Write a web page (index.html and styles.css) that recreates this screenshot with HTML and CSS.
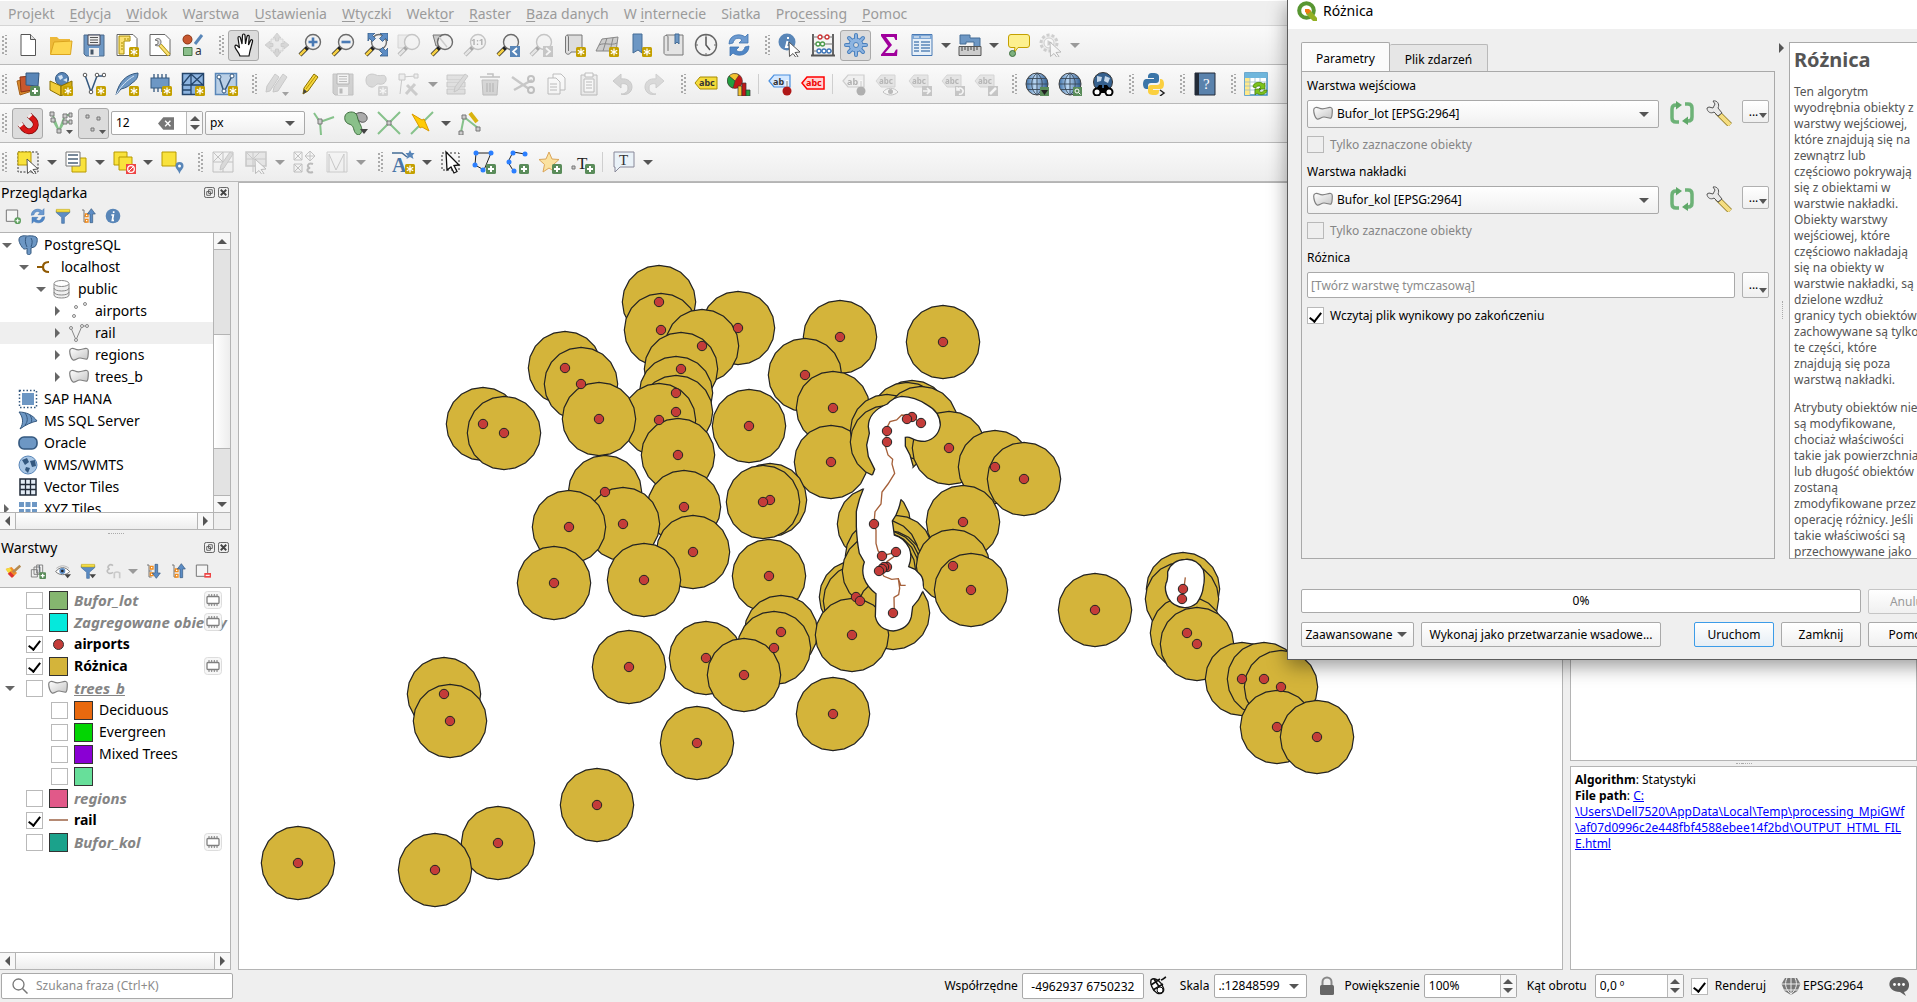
FILE: index.html
```html
<!DOCTYPE html>
<html lang="pl">
<head>
<meta charset="utf-8">
<title>QGIS</title>
<link rel="stylesheet" href="styles.css">
</head>
<body>
<svg class="paints" aria-hidden="true">
<defs>
<linearGradient id="grey" x1="0" y1="0" x2="1" y2="1"><stop offset="0" stop-color="#fff"/><stop offset="1" stop-color="#c4c4c4"/></linearGradient>
<linearGradient id="globe" x1="0" y1="0" x2="1" y2="0"><stop offset="0" stop-color="#3c6ea5"/><stop offset=".4" stop-color="#b9d6f2"/><stop offset="1" stop-color="#2c5a90"/></linearGradient>
</defs>
</svg>
<svg class="sprite" aria-hidden="true">
<symbol id="y" viewBox="0 0 24 24"><rect x="14" y="14" width="10" height="10" rx="1.500" fill="#c4a000"/><path d="M19 15.500v7M15.800 17.200l6.400 3.600M22.200 17.200l-6.400 3.600" stroke="#fff" stroke-width="1.300"/></symbol>
<symbol id="g" viewBox="0 0 24 24"><rect x="14" y="14" width="10" height="10" rx="1.500" fill="#5a8c5a"/><path d="M19 16v6M16 19h6" stroke="#fff" stroke-width="2"/></symbol>
<symbol id="lens" viewBox="0 0 24 24"><path d="M10 14L2 22" stroke="#222" stroke-width="4"/><path d="M7.500 16.500L2 22" stroke="#f5cf43" stroke-width="2.600"/><circle cx="15" cy="9" r="7.500" fill="#f1f1f1" stroke="#6b6b6b" stroke-width="1.400"/></symbol>
<symbol id="cur" viewBox="0 0 24 24"><path d="M11 9l11 10-5 .5 3 4-2 1-3-4-3.500 3z" fill="#fff" stroke="#555" stroke-width="1"/></symbol>
<symbol id="new" viewBox="0 0 24 24"><path d="M5 1.500h9.500l5 5V22.500H5z" fill="#fff" stroke="#555"/><path d="M14.500 1.500v5h5" fill="#ddd" stroke="#555"/></symbol>
<symbol id="open" viewBox="0 0 24 24"><path d="M1 21V4h7l2 2h11v15z" fill="#edb93a"/><path d="M1.500 21.500L5 9l18-1-1.500 13.500z" fill="#fdd64f" stroke="#dba520"/></symbol>
<symbol id="save" viewBox="0 0 24 24"><path d="M2 2h20v21H4l-2-2z" fill="#6d97c4" stroke="#4d6b8c"/><path d="M6 2h12v10H6z" fill="#eee" stroke="#445"/><path d="M8 4.500h8M8 7h8M8 9.500h8" stroke="#555"/><path d="M7 15h10v8H7z" fill="#eee"/><path d="M8.500 16.500h3v5h-3z" fill="#456"/></symbol>
<symbol id="layout" viewBox="0 0 24 24"><path d="M2 1.500h16l4 4V22.500H2z" fill="#fff" stroke="#666"/><path d="M4 3h11v5H9v13H4z" fill="#fbe174" stroke="#a88c00"/><path d="M6 10h2M6 13h2M6 16h2M10 5v2M13 5v2" stroke="#a88c00"/><use href="#y"/></symbol>
<symbol id="lman" viewBox="0 0 24 24"><path d="M2 1.500h15l5 5V22.500H2z" fill="#fff" stroke="#666"/><path d="M12 12l9 10" stroke="#a88c00" stroke-width="4"/><path d="M12 12l9 10" stroke="#fbe174" stroke-width="2.500"/><path d="M7 7l3 1v3l-3 1c3 2 6 0 6-3s-3-5-6-2z" fill="#ddd" stroke="#777"/></symbol>
<symbol id="style" viewBox="0 0 24 24"><circle cx="6.500" cy="6.500" r="4.500" fill="#c8572f" stroke="#8b3413"/><path d="M14 11l7-9" stroke="#5986b8" stroke-width="3"/><path d="M2.500 14.500h8.500v8H2.500z" fill="#8bbf8b" stroke="#4a7a4a"/><text x="14" y="22" font-family="Noto Sans" font-size="12" fill="#333">a</text></symbol>
<symbol id="hand" viewBox="0 0 24 24"><path d="M8 23c-1-4-6-8-5-10s3 0 4.500 2L6 5c0-2 2-2 2.500 0l1.500 6L10.500 2.500c0-2 2.500-2 2.500 0l.5 8.500 1.500-7.500c.5-1.500 2.500-1.500 2.200.5L16.500 12l2-4.500c1-1.500 2.500-.5 2 1L18 18l-1 5z" fill="#fff" stroke="#111" stroke-width="1.200"/></symbol>
<symbol id="pan" viewBox="0 0 24 24"><path d="M6 6h12v12H6z" fill="#e8dc8a" stroke="#999"/><path d="M12 0l4 5h-2.500v3h-3V5H8zM12 24l4-5h-2.500v-3h-3v3H8zM0 12l5-4v2.500h3v3H5V16zM24 12l-5-4v2.500h-3v3h3V16z" fill="#8aa" stroke="#777" stroke-width=".7"/></symbol>
<symbol id="zin" viewBox="0 0 24 24"><use href="#lens"/><path d="M15 4.500v9M10.500 9h9" stroke="#4a7ab4" stroke-width="2.600"/></symbol>
<symbol id="zout" viewBox="0 0 24 24"><use href="#lens"/><path d="M10.500 9h9" stroke="#4a7ab4" stroke-width="2.600"/></symbol>
<symbol id="zfull" viewBox="0 0 24 24"><use href="#lens"/><path d="M4 0h7L8.500 2.500l3 3-3 3-3-3L4 8zM24 0v8l-2.500-2.500-3 3-3-3 3-3L16 0zM24 23h-8l2.500-2.500-3-3 3-3 3 3L24 15z" fill="#5c8cc4" stroke="#345a85" stroke-width=".8"/></symbol>
<symbol id="zsel" viewBox="0 0 24 24"><path d="M1 2h12v13H1z" fill="#e9de8c" stroke="#999"/><use href="#lens"/></symbol>
<symbol id="zlay" viewBox="0 0 24 24"><path d="M3 2h10l3 11H6z" fill="#ccc" stroke="#777"/><use href="#lens"/><path d="M9 4l8 10" stroke="#ccc" stroke-width="1.500"/></symbol>
<symbol id="z11" viewBox="0 0 24 24"><use href="#lens"/><text x="8" y="12" font-family="Noto Sans" font-weight="700" font-size="9" fill="#333">1:1</text></symbol>
<symbol id="zprev" viewBox="0 0 24 24"><use href="#lens"/><path d="M14 13h10v11H14z" fill="#5986b8"/><path d="M21 15l-4 3.500 4 3.500" fill="none" stroke="#fff" stroke-width="1.700"/></symbol>
<symbol id="znext" viewBox="0 0 24 24"><use href="#lens"/><path d="M14 13h10v11H14z" fill="#777"/><path d="M17 15l4 3.500-4 3.500" fill="none" stroke="#fff" stroke-width="1.700"/></symbol>
<symbol id="map" viewBox="0 0 24 24"><path d="M5 2h15v17H9c-1 3-5 3-5.500 0V4C3.500 2 6 1.500 6.500 4v14" fill="#ddd" stroke="#777"/><use href="#y"/></symbol>
<symbol id="m3d" viewBox="0 0 24 24"><path d="M7 6l16-2-2 14H1z" fill="#ccc" stroke="#888"/><path d="M4 12c6-3 12 1 18-2M12 5L8 18M18 5l-3 13" stroke="#888" fill="none"/><use href="#y"/></symbol>
<symbol id="bmnew" viewBox="0 0 24 24"><path d="M5 1h9v19l-4-3-5 3z" fill="#6d97c4" stroke="#456d96"/><use href="#y"/></symbol>
<symbol id="bm" viewBox="0 0 24 24"><path d="M5 2h17v20H6c-3 0-3-2-3-2V4c0-2 4-2 4 0v14" fill="#e4e4e4" stroke="#777"/><path d="M14 1h4v10l-2-2-2 2z" fill="#6d97c4" stroke="#456d96"/></symbol>
<symbol id="clock" viewBox="0 0 24 24"><circle cx="12" cy="12" r="10.500" fill="#f3f3f3" stroke="#666" stroke-width="1.400"/><path d="M12 4v8l4 5" stroke="#555" stroke-width="1.500" fill="none"/><path d="M12 2v2M12 20v2M2 12h2M20 12h2" stroke="#666"/></symbol>
<symbol id="refresh" viewBox="0 0 24 24"><path d="M2 11C2 1 14 0 18 4l3-3v9h-9l3-3C12 4 7 5 6 10z" fill="#6c9ad0" stroke="#3f74b0" stroke-width=".8"/><path d="M22 13c0 10-12 11-16 7l-3 3v-9h9l-3 3c3 3 8 2 9-3z" fill="#4f86c6" stroke="#3f74b0" stroke-width=".8"/></symbol>
<symbol id="info" viewBox="0 0 24 24"><circle cx="9" cy="9" r="8.500" fill="#5986b8"/><path d="M10 4v2M9.500 8L8 14h2.500" stroke="#fff" stroke-width="2" fill="none"/><use href="#cur"/></symbol>
<symbol id="infob" viewBox="0 0 24 24"><circle cx="12" cy="12" r="11" fill="#5986b8"/><path d="M13 5v2.500M9.500 10.500h3l-1.500 8h2.500" stroke="#fff" stroke-width="2.500" fill="none"/></symbol>
<symbol id="abacus" viewBox="0 0 24 24"><path d="M2 1v21M22 1v21M0 22.500h24" stroke="#555" stroke-width="1.800"/><path d="M2 4h20M2 11h20M2 18h20" stroke="#777"/><g fill="#fff" stroke-width="1.300"><g stroke="#c33"><circle cx="9" cy="4" r="2"/><circle cx="16" cy="4" r="2"/></g><g stroke="#4a9a4a"><circle cx="7" cy="11" r="2"/><circle cx="11.500" cy="11" r="2"/></g><g stroke="#3c74b8"><circle cx="8" cy="18" r="2"/><circle cx="13" cy="18" r="2"/><circle cx="18" cy="18" r="2"/></g></g></symbol>
<symbol id="gear" viewBox="0 0 24 24"><g stroke="#4a80bd" stroke-width="4" stroke-linecap="round"><path d="M12 2v20M2 12h20M5 5l14 14M19 5L5 19"/></g><circle cx="12" cy="12" r="7" fill="#8db4e0" stroke="#4a80bd"/><path d="M12 2v20M2 12h20M5 5l14 14M19 5L5 19" stroke="#8db4e0" stroke-width="2" stroke-linecap="round"/><circle cx="12" cy="12" r="2.500" fill="#ddd" stroke="#4a80bd"/></symbol>
<symbol id="sigma" viewBox="0 0 24 24"><path d="M4 1h16v6h-1.500L17 4H9l6 8-7 8h9l2-3.500h1.500L20 23H4v-1.500L11 13 4 3z" fill="#a0009c"/></symbol>
<symbol id="table" viewBox="0 0 24 24"><path d="M2 1.500h20v21H2z" fill="#e6eff8" stroke="#4a7ab4"/><path d="M2 2h20v4H2z" fill="#7da6d4"/><path d="M4 4h5M11 4h9" stroke="#fff"/><path d="M4 9h5M11 9h9M4 12h5M11 12h9M4 15h5M11 15h9M4 18h5M11 18h9" stroke="#5986b8" stroke-width="1.300"/></symbol>
<symbol id="ruler" viewBox="0 0 24 24"><path d="M2 2h10v3h10v9h-6V9H8v2H2z" fill="#6d97c4" stroke="#456d96"/><path d="M1 13.500h22v9H1z" fill="#ccc" stroke="#555"/><path d="M4 14v4M7 14v3M10 14v4M13 14v3M16 14v4M19 14v3" stroke="#444"/></symbol>
<symbol id="tip" viewBox="0 0 24 24"><path d="M5 1.500h16q2.500 0 2.500 2.500v8q0 2.500-2.500 2.500h-9L8 20l1-5.500H5Q2.500 14.500 2.500 12V4Q2.500 1.500 5 1.500z" fill="#fdf08f" stroke="#c4a000"/><circle cx="6.500" cy="20.500" r="3" fill="#7db07d" stroke="#3f6f3f"/></symbol>
<symbol id="run" viewBox="0 0 24 24"><circle cx="10" cy="10" r="8" fill="#ddd" stroke="#888" stroke-width="3" stroke-dasharray="3 2"/><circle cx="10" cy="10" r="5" fill="#fff" stroke="#888"/><path d="M8.500 7v6l5-3z" fill="#888"/><use href="#cur"/></symbol>
<symbol id="dsm" viewBox="0 0 24 24"><path d="M1 9l12-3 3 13-12 4z" fill="#d98a2b" stroke="#a5601a"/><path d="M4 5l12-1 1 14-12 2z" fill="#c8572f" stroke="#8b3413"/><path d="M10 1h13l-1 13-12-1z" fill="#5986b8" stroke="#34587f"/><use href="#g"/></symbol>
<symbol id="gpkg" viewBox="0 0 24 24"><circle cx="13" cy="7" r="6.500" fill="#5986b8" stroke="#34587f"/><path d="M9 4l4-1 1 3-3 2zM14 8l4-2v4z" fill="#d5e5f5"/><path d="M1 9l11 5v10L1 18z" fill="#f2cd3a" stroke="#8a7000"/><path d="M12 14l11-5v9l-11 6z" fill="#d6ae14" stroke="#8a7000"/><use href="#y"/></symbol>
<symbol id="vnew" viewBox="0 0 24 24"><path d="M3 3l6 17 6-16h7" fill="none" stroke="#34587f" stroke-width="1.500"/><g fill="#fff" stroke="#555"><circle cx="3" cy="3" r="1.800"/><circle cx="9" cy="20" r="1.800"/><circle cx="15" cy="3" r="1.800"/><circle cx="22" cy="3" r="1.800"/></g><use href="#y"/></symbol>
<symbol id="feather" viewBox="0 0 24 24"><path d="M1 23C4 9 12 2 23 1c0 6-3 8-6 10-3 3-6 5-11 6z" fill="#6d97c4" stroke="#34587f"/><path d="M1 23C6 14 12 8 19 4" stroke="#d5e5f5" fill="none"/><use href="#y"/></symbol>
<symbol id="chip" viewBox="0 0 24 24"><path d="M6 2v18M10 2v18M14 2v18M18 2v18" stroke="#34587f" stroke-width="1.300"/><rect x="3" y="6" width="18" height="10" fill="#6d97c4" stroke="#34587f"/><use href="#y"/></symbol>
<symbol id="mesh" viewBox="0 0 24 24"><path d="M1.500 1.500h21v21h-21z" fill="#8db4e0" stroke="#24456b" stroke-width="1.500"/><path d="M1 13h22M10 1v22M10 13L22 2M10 2l12 11M1 13l9-11M1 18h9" stroke="#24456b" stroke-width="1.300" fill="none"/><use href="#y"/></symbol>
<symbol id="vt" viewBox="0 0 24 24"><path d="M1.500 1.500h21v21h-21z" fill="#b9cfe6" stroke="#5986b8" stroke-width="1.500"/><path d="M5 5l5 15 8-16" fill="none" stroke="#34587f" stroke-width="1.500"/><g fill="#fff" stroke="#34587f"><circle cx="5" cy="5" r="2"/><circle cx="10" cy="19" r="2"/><circle cx="18" cy="4" r="2"/></g><use href="#y"/></symbol>
<symbol id="pencil" viewBox="0 0 24 24"><path d="M5 22l1-6L16 2l4 3L10 19z" fill="#f5d63d" stroke="#8a7000"/><path d="M8 17L18 3.500" stroke="#b89400"/><path d="M5 22l1-5 3 2.500z" fill="#444"/></symbol>
<symbol id="pencils" viewBox="0 0 24 24"><path d="M1 20l1-6L10 2l4 3-9 14z" fill="#aaa" stroke="#777"/><path d="M8 20l1-5L18 2l4 3-9 14z" fill="#aaa" stroke="#777"/><path d="M17 20h7l-3.500 4z" fill="#111"/></symbol>
<symbol id="poly" viewBox="0 0 24 24"><path d="M2 8c0-6 6-7 10-5s9-2 10 3-4 7-7 6-4 4-8 3-5-4-5-7z" fill="#aaa" stroke="#777"/><use href="#y"/></symbol>
<symbol id="vtx" viewBox="0 0 24 24"><path d="M3 22L5 5l14-1" fill="none" stroke="#777"/><path d="M2 2h6v6H2zM17 2h4v4h-4z" fill="#ddd" stroke="#777"/><path d="M9 22l9-10M10 13l10 10" stroke="#888" stroke-width="3"/></symbol>
<symbol id="form" viewBox="0 0 24 24"><path d="M2 3h18v5H2zM2 10h18v5H2zM2 17h18v5H2z" fill="#bdbf9a" stroke="#777"/><path d="M9 20l1-5L20 2l3 2-10 14z" fill="#aaa" stroke="#777"/></symbol>
<symbol id="trash" viewBox="0 0 24 24"><path d="M4 8h16l-1 15H5z" fill="#b99" stroke="#755"/><path d="M2 5h20M9 2h6v3M9 11v9M12 11v9M15 11v9" stroke="#755" stroke-width="1.500" fill="none"/></symbol>
<symbol id="cut" viewBox="0 0 24 24"><path d="M1 5l17 12M3 18L21 8" stroke="#777" stroke-width="2.500"/><circle cx="20" cy="18" r="3" fill="none" stroke="#855" stroke-width="2"/><circle cx="20" cy="7" r="3" fill="none" stroke="#855" stroke-width="2"/></symbol>
<symbol id="copy" viewBox="0 0 24 24"><path d="M9 2h8l4 4v12H9z" fill="#fff" stroke="#555"/><path d="M4 6h8l4 4v12H4z" fill="#fff" stroke="#555"/><path d="M6 12h7M6 15h7M6 18h7" stroke="#555"/></symbol>
<symbol id="paste" viewBox="0 0 24 24"><path d="M4 3h16v20H4z" fill="#ddd" stroke="#555"/><path d="M8 1h8v4H8zM7 7h10v13H7z" fill="#fff" stroke="#555"/><path d="M9 10h6M9 13h6M9 16h6" stroke="#555"/></symbol>
<symbol id="undo" viewBox="0 0 24 24"><path d="M11 22c4 0 7-2 7-6s-3-5-7-4v4L3 9l8-7v5c7-1 11 3 11 8s-5 9-11 7z" fill="#a98" stroke="#877"/></symbol>
<symbol id="redo" viewBox="0 0 24 24"><path d="M13 22c-4 0-7-2-7-6s3-5 7-4v4l8-7-8-7v5C6 6 2 10 2 15s5 9 11 7z" fill="#aaa" stroke="#888"/></symbol>
<symbol id="abc" viewBox="0 0 24 24"><path d="M1 11l5-6h17v12H6z" fill="#f5dc3c" stroke="#a88c00"/><text x="5" y="14" font-family="Noto Sans" font-weight="700" font-size="9" fill="#333">abc</text></symbol>
<symbol id="abcr" viewBox="0 0 24 24"><path d="M1 11l5-6h17v12H6z" fill="#ffd4d4" stroke="#f00" stroke-width="1.500"/><text x="5" y="14" font-family="Noto Sans" font-weight="700" font-size="9" fill="#e00">abc</text></symbol>
<symbol id="abp" viewBox="0 0 24 24"><path d="M1 9l5-6h16v12H6z" fill="#d4e8ff" stroke="#4a90e0" stroke-width="1.200"/><text x="5" y="12.500" font-family="Noto Sans" font-weight="700" font-size="9" fill="#333">ab</text><path d="M19 8v8" stroke="#fff" stroke-width="3"/><circle cx="19" cy="19" r="4.500" fill="#b01818"/><path d="M19 9v6" stroke="#777"/></symbol>
<symbol id="abm" viewBox="0 0 24 24"><path d="M1 9l5-6h14v12H6z" fill="#cdc9a4" stroke="#998"/><text x="4" y="12" font-family="Noto Sans" font-weight="700" font-size="8" fill="#444">abc</text><path d="M14 14h10v10H14z" fill="#777"/></symbol>
<symbol id="abg" viewBox="0 0 24 24"><use href="#abm"/><path d="M15 19h6M19 16l3 3-3 3" stroke="#fff" stroke-width="1.700" fill="none"/></symbol>
<symbol id="abr" viewBox="0 0 24 24"><use href="#abm"/><path d="M17 17a3 3 0 1 1 1 5M16 15v3h3" stroke="#fff" stroke-width="1.500" fill="none"/></symbol>
<symbol id="abx" viewBox="0 0 24 24"><use href="#abm"/><path d="M16 22l6-6" stroke="#fff" stroke-width="2.500"/></symbol>
<symbol id="abe" viewBox="0 0 24 24"><path d="M1 9l5-6h14v12H6z" fill="#cdc9a4" stroke="#998"/><text x="4" y="12" font-family="Noto Sans" font-weight="700" font-size="8" fill="#444">abc</text><path d="M8 20c4-5 11-5 15 0-4 4-11 4-15 0z" fill="#fff" stroke="#666"/><circle cx="15.500" cy="19.500" r="2.500" fill="#555"/></symbol>
<symbol id="diag" viewBox="0 0 24 24"><circle cx="8" cy="9" r="7.500" fill="#c01818" stroke="#333" stroke-width=".5"/><path d="M8 9L2 4a7.500 7.500 0 0 1 10-1z" fill="#f2c230" stroke="#333" stroke-width=".5"/><path d="M8 9L2 4a7.500 7.500 0 0 0 4 12z" fill="#22a040" stroke="#333" stroke-width=".5"/><path d="M11 14h4v10h-4z" fill="#f2c230" stroke="#333" stroke-width=".7"/><path d="M15 11h4v13h-4z" fill="#c01818" stroke="#333" stroke-width=".7"/><path d="M19 18h4v6h-4z" fill="#22a040" stroke="#333" stroke-width=".7"/></symbol>
<symbol id="web" viewBox="0 0 24 24"><circle cx="12" cy="12" r="11" fill="url(#globe)" stroke="#444"/><path d="M12 1v22M1 12h22M3 6.500h18M3 17.500h18M12 1C5 6 5 18 12 23M12 1c7 5 7 17 0 22" fill="none" stroke="#3a4a5a" stroke-width=".9"/></symbol>
<symbol id="webadd" viewBox="0 0 24 24"><use href="#web"/><path d="M15 15h9v9h-9z" fill="#5a8c5a"/><path d="M16 18h7l-3.500 5z" fill="#222"/></symbol>
<symbol id="webq" viewBox="0 0 24 24"><use href="#web"/><path d="M15 15h9v9h-9z" fill="#5a8c5a"/><circle cx="19" cy="19" r="2" fill="none" stroke="#fff"/><path d="M20.500 20.500l2 2" stroke="#fff"/></symbol>
<symbol id="bino" viewBox="0 0 24 24"><circle cx="12" cy="10" r="9.500" fill="#35618f" stroke="#333"/><path d="M6 4l5 1-1 4-4 1zM14 4l5 2-2 5-4-2z" fill="#c5d8ea"/><path d="M8 13h3v3h2v-3h3l6 8H2z" fill="#000"/><circle cx="6" cy="20" r="3.500" fill="#fff" stroke="#000" stroke-width="2"/><circle cx="18" cy="20" r="3.500" fill="#fff" stroke="#000" stroke-width="2"/></symbol>
<symbol id="py" viewBox="0 0 24 24"><path d="M11 1c-5 0-5 2-5 5h6v1H4c-4 0-4 10 0 10h2v-3c0-2 1-3 3-3h5c2 0 3-1 3-3V5c0-3-2-4-6-4z" fill="#3b75a8"/><path d="M12 23c5 0 5-2 5-5h-6v-1h8c4 0 4-10 0-10h-1v3c0 2-1 3-3 3H9c-2 0-3 1-3 3v3c0 3 2 4 6 4z" fill="#fbd040"/><path d="M18 18l4 3-4 3" fill="none" stroke="#222" stroke-width="1.500"/></symbol>
<symbol id="help" viewBox="0 0 24 24"><path d="M2 1h20v22H2z" fill="#5a82ac" stroke="#222b38"/><path d="M2 1h4v22H2z" fill="#222b38"/><text x="10" y="17" font-family="Liberation Serif" font-size="15" fill="#fff">?</text></symbol>
<symbol id="sheet" viewBox="0 0 24 24"><path d="M1 1h22v22H1z" fill="#fff" stroke="#3f8fc0" stroke-width="1.500"/><path d="M1 1h22v5H1z" fill="#6fb6dc"/><path d="M1 6h5v17H1z" fill="#ffe98a"/><path d="M6 6v17M11 6v17M16 6v17M1 10h22M1 14h22M1 18h22" stroke="#9bc" stroke-width=".8"/><path d="M9 15c0-5 8-6 10-3l2-1v6h-6l2-2c-1-2-5-1-5 1zM23 18c0 5-8 6-10 3l-2 2v-6h6l-2 2c1 2 5 1 5-1z" fill="#7cc31c" stroke="#447a08" stroke-width=".7"/></symbol>
<symbol id="magnet" viewBox="0 0 24 24"><path d="M4 13l4 5a6.200 6.200 0 0 0 10-9l-5-5" fill="none" stroke="#7d0505" stroke-width="6"/><path d="M4 13l4 5a6.200 6.200 0 0 0 10-9l-5-5" fill="none" stroke="#d81818" stroke-width="4.500"/><path d="M3.700 12.600l2 2.500M12.700 3.700l2 2" stroke="#eee" stroke-width="5"/></symbol>
<symbol id="snapv" viewBox="0 0 24 24"><path d="M3 2l7 18 6-16h6M4 9l6 11 5-9h7" fill="none" stroke="#86c28b" stroke-width="2"/><g fill="#ccc" stroke="#777"><path d="M1 1h4v4H1zM2 7h4v4H2zM8 18h4v4H8zM14 3h4v4h-4zM20 2h3v4h-3zM14 9h4v4h-4zM20 9h3v4h-3z"/></g><path d="M17 19h7l-3.500 4z" fill="#555"/></symbol>
<symbol id="snapp" viewBox="0 0 24 24"><g fill="#ccc" stroke="#777"><path d="M4 4h3v3H4zM15 6h3v3h-3zM9 17h3v3H9z"/></g><path d="M17 19h7l-3.500 4z" fill="#555"/></symbol>
<symbol id="topo" viewBox="0 0 24 24"><path d="M3 2l6 9 14-5M9 11l1 13" fill="none" stroke="#86c28b" stroke-width="2"/><path d="M7 8h4v5H7z" fill="#ccc" stroke="#777"/></symbol>
<symbol id="overlap" viewBox="0 0 24 24"><path d="M12 3c4-3 10-1 11 3s-3 6-6 5-5-4-5-8z" fill="#aaa" stroke="#555"/><path d="M1 5c1-4 7-5 10-3s2 5 4 9 4 7 2 11-6 1-7-3-2-5-5-6-5-4-4-8z" fill="#8ac08a" stroke="#3f6f3f"/><path d="M16 18h8l-4 5z" fill="#444"/></symbol>
<symbol id="inter" viewBox="0 0 24 24"><path d="M1 1l22 22M23 1L1 23" stroke="#86c28b" stroke-width="2"/><path d="M10 10h4v4h-4z" fill="#ccc" stroke="#777"/></symbol>
<symbol id="bolt" viewBox="0 0 24 24"><path d="M23 1L1 23" stroke="#86c28b" stroke-width="2"/><path d="M2 3l10 6 2-1 5 12-7-4-2 1z" fill="#ffcb05" stroke="#d99a00"/></symbol>
<symbol id="trace" viewBox="0 0 24 24"><path d="M3 21L6 6l14 11" fill="none" stroke="#86c28b" stroke-width="2"/><path d="M4 4h4v4H4zM1 20h4v4H1zM18 16h4v4h-4z" fill="#ccc" stroke="#777"/><path d="M12 2l7 9" stroke="#d9b310" stroke-width="4"/></symbol>
<symbol id="sel" viewBox="0 0 24 24"><path d="M2 2h20v20H2z" fill="#eee" stroke="#333" stroke-dasharray="2 1.500"/><path d="M2 2h13v13H2z" fill="#f9e23c" stroke="#b89a00"/><use href="#cur"/></symbol>
<symbol id="selform" viewBox="0 0 24 24"><path d="M8 8h14v14H8z" fill="#f9e23c" stroke="#b89a00"/><path d="M2 2h14v14H2z" fill="#fff" stroke="#777"/><path d="M4 5h10M4 9h10M4 13h10" stroke="#789" stroke-width="2"/></symbol>
<symbol id="desel" viewBox="0 0 24 24"><path d="M2 2h13v13H2z" fill="#f9e23c" stroke="#b89a00"/><path d="M7 7h13v13H7z" fill="#f9e23c" stroke="#b89a00"/><path d="M14 14h10v10H14z" fill="#e44"/><circle cx="19" cy="19" r="3.300" fill="none" stroke="#fff" stroke-width="1.300"/><path d="M17 21l4-4" stroke="#fff"/></symbol>
<symbol id="selloc" viewBox="0 0 24 24"><path d="M2 2h14v14H2z" fill="#f9e23c" stroke="#b89a00"/><path d="M19.500 24c-1-4-4-5-4-8a4 4 0 0 1 8 0c0 3-3 4-4 8z" fill="#5986b8"/><circle cx="19.500" cy="16" r="1.500" fill="#fff"/></symbol>
<symbol id="gg1" viewBox="0 0 24 24"><path d="M2 2h20v20H2zM2 12h20M12 2v20M2 12L12 2M2 2l10 10" fill="#eee" stroke="#666"/><path d="M9 20l1-5L19 2l3 2-9 14z" fill="#aaa" stroke="#777"/></symbol>
<symbol id="gg2" viewBox="0 0 24 24"><path d="M2 2h20v14H2z" fill="#cfccab" stroke="#777" stroke-width="1.500"/><path d="M2 9h20M9 2v20M2 2l7 7M9 9l7-7" stroke="#777"/><use href="#cur"/></symbol>
<symbol id="gg3" viewBox="0 0 24 24"><path d="M2 2h8v8H2zM2 14h8v8H2zM2 2l8 8M2 10l8-8M2 14l8 8M2 22l8-8M18 1l5 5-5 5-5-5zM18 1v10M13 6h10" fill="none" stroke="#666"/><path d="M21 14c-5-2-7 3-3 4-5 1-2 6 3 4" fill="none" stroke="#555" stroke-width="2"/></symbol>
<symbol id="gg4" viewBox="0 0 24 24"><path d="M2 2h20v20H2z" fill="#eee" stroke="#888"/><path d="M4 4l7 16 8-16M4 4v18M19 4v18" fill="none" stroke="#777"/></symbol>
<symbol id="anno" viewBox="0 0 24 24"><path d="M1 3h10l5 4" stroke="#456d96" fill="none" stroke-width="1.500"/><path d="M19 0l1.500 3h3l-2 2.500 1 3.500-3.500-2-3.500 2 1-3.500-2-2.500h3z" fill="#5986b8"/><text x="1" y="22" font-family="Liberation Serif" font-weight="700" font-size="20" fill="#4a76a8">A</text><use href="#y"/></symbol>
<symbol id="asel" viewBox="0 0 24 24"><path d="M3 3h17v17H3z" fill="none" stroke="#333" stroke-dasharray="2 2"/><path d="M7 2l13 13-5 .5 3 6-3 1.500-3-6-4 3z" fill="#fff" stroke="#111" stroke-width="1.300"/></symbol>
<symbol id="apoly" viewBox="0 0 24 24"><path d="M4 3h15l-7 17-9-5z" fill="#eee" stroke="#222"/><g fill="#2b7fff"><circle cx="4" cy="3" r="2.500"/><circle cx="19" cy="3" r="2.500"/><circle cx="3" cy="15" r="2.500"/><circle cx="11" cy="20" r="2.500"/></g><use href="#g"/></symbol>
<symbol id="aline" viewBox="0 0 24 24"><path d="M20 4L8 2 3 12l6 10" fill="none" stroke="#222"/><g fill="#2b7fff"><circle cx="20" cy="4" r="2.500"/><circle cx="8" cy="3" r="2.500"/><circle cx="4" cy="12" r="2.500"/><circle cx="9" cy="21" r="2.500"/></g><use href="#g"/></symbol>
<symbol id="astar" viewBox="0 0 24 24"><path d="M11 2l3 7 7 .5-5.500 5L17 22l-6-4-6 4 1.500-7.500L1 9.500 8 9z" fill="#fbe2a0" stroke="#dba65a"/><use href="#g"/></symbol>
<symbol id="atext" viewBox="0 0 24 24"><path d="M1 16h3v3H1z" fill="#ccc" stroke="#777"/><text x="6" y="19" font-family="Liberation Serif" font-size="17" fill="#222">T</text><use href="#g"/></symbol>
<symbol id="atip" viewBox="0 0 24 24"><path d="M2 2h20v15H8l-5 5v-5H2z" fill="#eaf2f8" stroke="#889"/><text x="7" y="14.500" font-family="Liberation Serif" font-size="15" fill="#333">T</text></symbol>
<symbol id="addl" viewBox="0 0 24 24"><path d="M2 3h17v17H2z" fill="#f5f5f5" stroke="#777" stroke-width="1.500"/><circle cx="19" cy="19" r="5" fill="#5fa05f"/><path d="M19 16v6M16 19h6" stroke="#fff" stroke-width="1.600"/></symbol>
<symbol id="funnel" viewBox="0 0 24 24"><path d="M2 4h20v3l-8 7v9h-4v-9L2 7z" fill="#5c8cc4" stroke="#3f6ca0"/><path d="M2 2h20v4H2z" fill="#f2dc45" stroke="#b89a00" stroke-width=".7"/></symbol>
<symbol id="tup" viewBox="0 0 24 24"><path d="M3 3h3v18h4M6 12h4" stroke="#777" stroke-width="1.500" fill="none"/><path d="M8 9h4v4H8zM8 17h4v4H8z" fill="#fff" stroke="#f28c1c" stroke-width="2"/><path d="M17 1l6 8h-4v13h-4V9h-4z" fill="#5c8cc4" stroke="#34587f"/></symbol>
<symbol id="tdn" viewBox="0 0 24 24"><path d="M3 3h3v18h4M6 12h4" stroke="#777" stroke-width="1.500" fill="none"/><path d="M8 5h4v4H8zM8 15h4v4H8z" fill="#fff" stroke="#f28c1c" stroke-width="2"/><path d="M17 23l6-8h-4V2h-4v13h-4z" fill="#5c8cc4" stroke="#34587f"/></symbol>
<symbol id="brush" viewBox="0 0 24 24"><path d="M1 9l9-3 8 9-7 7z" fill="#f28c28"/><path d="M4 16l4-3 6 6-4 3z" fill="#d33"/><path d="M1 9l6-2 3 4-5 4z" fill="#f5dc3c"/><path d="M12 14L23 4" stroke="#b58a50" stroke-width="4"/></symbol>
<symbol id="grp" viewBox="0 0 24 24"><path d="M2 10h9v11H2zM6 6h9v11H6zM10 3h9v12h-9z" fill="#eee" stroke="#777" stroke-width="1.300"/><path d="M14 3v11" stroke="#345"/><use href="#g"/></symbol>
<symbol id="eye" viewBox="0 0 24 24"><path d="M1 13c6-8 15-8 21 0-6 6-15 6-21 0z" fill="#fff" stroke="#777" stroke-width="1.500"/><circle cx="11" cy="12" r="4.500" fill="#5c8cc4"/><circle cx="11" cy="12" r="2" fill="#222"/><path d="M2 8c6-5 13-5 19 0" stroke="#999" fill="none"/><path d="M14 17h10l-5 6z" fill="#444"/></symbol>
<symbol id="funneld" viewBox="0 0 24 24"><use href="#funnel"/><path d="M14 17h10l-5 6z" fill="#444"/></symbol>
<symbol id="eps" viewBox="0 0 24 24"><path d="M12 4C7 0 1 7 7 9 0 10 4 19 12 14" fill="none" stroke="#666" stroke-width="2.500"/><path d="M14 23v-8q4-3 8 0v8" fill="none" stroke="#888" stroke-width="2.500"/></symbol>
<symbol id="rem" viewBox="0 0 24 24"><path d="M2 3h17v17H2z" fill="#f5f5f5" stroke="#777" stroke-width="1.500"/><path d="M14 15h10v7H14z" fill="#e44"/><path d="M16 18.500h6" stroke="#fff" stroke-width="1.800"/></symbol>
<symbol id="flt" viewBox="0 0 12 12"><rect x=".5" y=".5" width="11" height="11" rx="2" fill="none" stroke="#555"/><path d="M5 3h4v4H5zM3 5h4v4H3z" fill="#fff" stroke="#555"/></symbol>
<symbol id="cls" viewBox="0 0 12 12"><rect x=".5" y=".5" width="11" height="11" rx="2" fill="none" stroke="#555"/><path d="M3 3l6 6M9 3L3 9" stroke="#444" stroke-width="2"/></symbol>
<symbol id="pg" viewBox="0 0 20 20"><path d="M2 2c3-2 6-1 7-1s8-1 10 2c1 3-1 9-3 9l-3 1v5c-1 3-4 2-4 0v-5c-2 2-4 1-5-1C1 8 0 4 2 2z" fill="#6d97c4" stroke="#34587f"/><path d="M8 2c-1 3-1 6 1 10M13 3c2 3 1 6 0 9" stroke="#34587f" fill="none"/></symbol>
<symbol id="conn" viewBox="0 0 20 20"><path d="M2 10h6M14 5c-5 0-6 3-6 5s1 5 6 5" fill="none" stroke="#8f5902" stroke-width="2.200"/></symbol>
<symbol id="db" viewBox="0 0 20 20"><path d="M2 5v11c0 4 15 4 15 0V5" fill="#f0f0f0" stroke="#888"/><ellipse cx="9.500" cy="4.500" rx="7.500" ry="3" fill="#fff" stroke="#888"/><path d="M2 9c0 4 15 4 15 0M2 13c0 4 15 4 15 0" fill="none" stroke="#888"/></symbol>
<symbol id="pts" viewBox="0 0 20 20"><g fill="#eee" stroke="#888"><circle cx="5" cy="15" r="1.500"/><circle cx="7" cy="6" r="1.500"/><circle cx="16" cy="3" r="1.500"/></g></symbol>
<symbol id="lin" viewBox="0 0 20 20"><path d="M2 5l5 12 6-14h6" fill="none" stroke="#888"/><g fill="#eee" stroke="#888"><circle cx="2" cy="5" r="1.500"/><circle cx="7" cy="17" r="1.500"/><circle cx="13" cy="3" r="1.500"/><circle cx="18" cy="3" r="1.500"/></g></symbol>
<symbol id="pol" viewBox="0 0 20 20"><path d="M.7 6C.7 3 4 3 6 4s5 1 8 0 5.300-1 5.300 2-.3 7-1.300 8-4-1-7-1-5 3-7 2S.7 9 .7 6z" fill="url(#grey)" stroke="#808080" stroke-width="1.200"/></symbol>
<symbol id="sap" viewBox="0 0 20 20"><path d="M4 4h12v12H4z" fill="#6d97c4"/><path d="M1.500 1.500h17v17h-17z" fill="none" stroke="#34587f" stroke-width="1.500" stroke-dasharray="1.500 2"/></symbol>
<symbol id="mssql" viewBox="0 0 20 20"><path d="M1 1c7 0 14 3 18 9-5 1-12 4-17 8 4-6 3-12-1-17z" fill="#6d97c4" stroke="#34587f"/><path d="M7 2c3 4 3 9 0 12M12 4c2 3 2 6 1 8" fill="none" stroke="#34587f"/></symbol>
<symbol id="ora" viewBox="0 0 20 20"><rect x="1" y="4" width="18" height="12" rx="5" fill="#6d97c4" stroke="#34587f" stroke-width="1.600"/></symbol>
<symbol id="wms" viewBox="0 0 20 20"><circle cx="10" cy="10" r="9" fill="#a9c6e4" stroke="#5986b8"/><path d="M4 5l5-2 2 4-4 3zM12 6l5-1 1 6-4 1zM8 12l4 1-2 5-3-3z" fill="#34587f"/></symbol>
<symbol id="vtl" viewBox="0 0 20 20"><path d="M2 2h16v16H2z" fill="#e3ecf6" stroke="#222b38" stroke-width="1.500"/><path d="M7.500 2v16M12.500 2v16M2 7.500h16M2 12.500h16" stroke="#222b38" stroke-width="1.300"/></symbol>
<symbol id="xyz" viewBox="0 0 20 20"><path d="M1 3h5v5H1zM7.500 3h5v5h-5zM14 3h5v5h-5zM1 10h5v5H1zM7.500 10h5v5h-5zM14 10h5v5h-5z" fill="#6d97c4"/></symbol>
<symbol id="mem" viewBox="0 0 18 18"><rect x=".5" y=".5" width="17" height="17" rx="3" fill="#f7f7f7" stroke="#ddd"/><path d="M5 3v12M7.700 3v12M10.300 3v12M13 3v12" stroke="#808080"/><rect x="3" y="5.500" width="12" height="7" rx="1" fill="#fff" stroke="#808080" stroke-width="1.300"/></symbol>
<symbol id="loop" viewBox="0 0 24 24"><path d="M9 21H6q-4 0-4-4V8q0-4 4-4h1" fill="none" stroke="#6db277" stroke-width="3.500"/><path d="M15 3h3q4 0 4 4v9q0 4-4 4h-1" fill="none" stroke="#6db277" stroke-width="3.500"/><path d="M6 0l6 4-6 4.500zM18 24l-6-4 6-4.500z" fill="#5fa868"/></symbol>
<symbol id="wrench" viewBox="0 0 26 26"><path d="M11 12l13 13" stroke="#8a7420" stroke-width="5.500"/><path d="M14 15l10 10" stroke="#f5dd80" stroke-width="4"/><path d="M1 8c0 4 4 6 7 4l4 4 4-3-4-5c2-4-1-8-5-7l2 3-2 4-4-1z" fill="#e8e8e8" stroke="#555"/></symbol>
<symbol id="lock" viewBox="0 0 16 20"><path d="M3.500 10V6a4.500 4.500 0 0 1 9 0v4" fill="none" stroke="#888" stroke-width="2"/><rect x="1" y="9" width="14" height="10" rx="1.500" fill="#666"/></symbol>
<symbol id="mouse" viewBox="0 0 20 20"><path d="M3 4c-1 3 1 10 6 13 5 2 8-2 6-6-1-4-8-11-12-7z" fill="#fff" stroke="#111" stroke-width="1.400"/><path d="M6 3l6 9M3 9l9-6M13 4c2 0 3-2 5-3M5 14l10-6" stroke="#111" stroke-width="1.600"/><circle cx="12" cy="14" r="3" fill="#fff" stroke="#111"/></symbol>
<symbol id="crs" viewBox="0 0 20 20"><path d="M4 2h12l3.500 6-3 7L10 19l-6.500-4-3-7z" fill="#777"/><path d="M0 8h20M3 14h14M10 1v18M6 2C3 8 5 14 10 18M14 2c3 6 1 12-4 16" stroke="#eee" fill="none"/></symbol>
<symbol id="msg" viewBox="0 0 20 20"><path d="M10 1c13 0 12 14 5 15l2 4-6-4C-3 16-3 1 10 1z" fill="#606060"/><circle cx="5.500" cy="8.500" r="1.400" fill="#fff"/><circle cx="10" cy="8.500" r="1.400" fill="#fff"/><circle cx="14.500" cy="8.500" r="1.400" fill="#fff"/></symbol>
<symbol id="qgis" viewBox="0 0 20 20"><circle cx="9.500" cy="9.500" r="7.300" fill="none" stroke="#589632" stroke-width="4"/><path d="M9 9h4l7 8v3h-4l-7-7z" fill="#93b023"/><path d="M8 8h4l2 2-3 3-3-2z" fill="#ee7913"/></symbol>
<symbol id="search" viewBox="0 0 16 16"><circle cx="6.500" cy="6.500" r="5.500" fill="none" stroke="#777" stroke-width="1.300"/><path d="M10.500 10.500l5 5" stroke="#777" stroke-width="1.500"/></symbol>
<symbol id="clr" viewBox="0 0 18 14"><path d="M6 0h12v14H6L0 7z" fill="#777"/><path d="M8 4l6 6M14 4l-6 6" stroke="#fff" stroke-width="1.500"/></symbol>
</svg>

<nav class="menu">
<a href="#">Pro<u>j</u>ekt</a><a href="#"><u>E</u>dycja</a><a href="#"><u>W</u>idok</a><a href="#">W<u>a</u>rstwa</a><a href="#"><u>U</u>stawienia</a><a href="#"><u>W</u>tyczki</a><a href="#">Wekt<u>o</u>r</a><a href="#"><u>R</u>aster</a><a href="#"><u>B</u>aza danych</a><a href="#">W <u>i</u>nternecie</a><a href="#">Siatka</a><a href="#">Pro<u>c</u>essing</a><a href="#"><u>P</u>omoc</a>
</nav>

<div class="bar" role="toolbar" aria-label="Projekt i widok">
<i class="grip first"></i>
<button aria-label="Nowy"><svg><use href="#new"/></svg></button><button aria-label="Otwórz"><svg><use href="#open"/></svg></button><button aria-label="Zapisz"><svg><use href="#save"/></svg></button><button aria-label="Nowy wydruk"><svg><use href="#layout"/></svg></button><button aria-label="Menedżer wydruków"><svg><use href="#lman"/></svg></button><button aria-label="Style"><svg><use href="#style"/></svg></button>
<i class="grip"></i>
<button class="on" aria-label="Przesuń"><svg><use href="#hand"/></svg></button><button disabled aria-label="Przesuń do zaznaczenia"><svg><use href="#pan"/></svg></button><button aria-label="Powiększ"><svg><use href="#zin"/></svg></button><button aria-label="Pomniejsz"><svg><use href="#zout"/></svg></button><button aria-label="Pełny zasięg"><svg><use href="#zfull"/></svg></button><button disabled aria-label="Do zaznaczenia"><svg><use href="#zsel"/></svg></button><button aria-label="Do warstwy"><svg><use href="#zlay"/></svg></button><button disabled aria-label="1:1"><svg><use href="#z11"/></svg></button><button aria-label="Poprzedni widok"><svg><use href="#zprev"/></svg></button><button disabled aria-label="Następny widok"><svg><use href="#znext"/></svg></button><button aria-label="Nowa mapa"><svg><use href="#map"/></svg></button><button aria-label="Nowa mapa 3D"><svg><use href="#m3d"/></svg></button><button aria-label="Nowa zakładka"><svg><use href="#bmnew"/></svg></button><button aria-label="Zakładki"><svg><use href="#bm"/></svg></button><button aria-label="Czas"><svg><use href="#clock"/></svg></button><button aria-label="Odśwież"><svg><use href="#refresh"/></svg></button>
<i class="grip"></i>
<button aria-label="Informacje"><svg><use href="#info"/></svg></button><button aria-label="Kalkulator"><svg><use href="#abacus"/></svg></button><button class="on" aria-label="Geoprocesing"><svg><use href="#gear"/></svg></button><button aria-label="Statystyki"><svg><use href="#sigma"/></svg></button><button aria-label="Tabela"><svg><use href="#table"/></svg></button><i class="arr"></i><button aria-label="Pomiar"><svg><use href="#ruler"/></svg></button><i class="arr"></i><button aria-label="Podpowiedzi"><svg><use href="#tip"/></svg></button><button disabled aria-label="Akcja"><svg><use href="#run"/></svg></button><i class="arr dim"></i>
</div>

<div class="bar" role="toolbar" aria-label="Warstwy i edycja">
<i class="grip first"></i>
<button aria-label="Źródła danych"><svg><use href="#dsm"/></svg></button><button aria-label="GeoPackage"><svg><use href="#gpkg"/></svg></button><button aria-label="Nowa warstwa"><svg><use href="#vnew"/></svg></button><button aria-label="SpatiaLite"><svg><use href="#feather"/></svg></button><button aria-label="Warstwa tymczasowa"><svg><use href="#chip"/></svg></button><button aria-label="Siatka"><svg><use href="#mesh"/></svg></button><button aria-label="Warstwa wirtualna"><svg><use href="#vt"/></svg></button>
<i class="grip"></i>
<button disabled aria-label="Bieżące edycje"><svg><use href="#pencils"/></svg></button><button aria-label="Edycja"><svg><use href="#pencil"/></svg></button><button disabled aria-label="Zapisz edycję"><svg><use href="#save"/></svg></button><button disabled aria-label="Dodaj obiekt"><svg><use href="#poly"/></svg></button><button disabled aria-label="Wierzchołki"><svg><use href="#vtx"/></svg></button><i class="arr dim"></i><button disabled aria-label="Atrybuty"><svg><use href="#form"/></svg></button><button disabled aria-label="Usuń"><svg><use href="#trash"/></svg></button><button disabled aria-label="Wytnij"><svg><use href="#cut"/></svg></button><button disabled aria-label="Kopiuj"><svg><use href="#copy"/></svg></button><button disabled aria-label="Wklej"><svg><use href="#paste"/></svg></button><button disabled aria-label="Cofnij"><svg><use href="#undo"/></svg></button><button disabled aria-label="Ponów"><svg><use href="#redo"/></svg></button>
<i class="grip"></i>
<button aria-label="Etykiety"><svg><use href="#abc"/></svg></button><button aria-label="Diagramy"><svg><use href="#diag"/></svg></button><i class="sep"></i><button aria-label="Przypięte"><svg><use href="#abp"/></svg></button><button aria-label="Nieumieszczone"><svg><use href="#abcr"/></svg></button><i class="sep"></i><button disabled aria-label="Przypnij"><svg><use href="#abp"/></svg></button><button disabled aria-label="Pokaż"><svg><use href="#abe"/></svg></button><button disabled aria-label="Przesuń etykietę"><svg><use href="#abg"/></svg></button><button disabled aria-label="Obróć"><svg><use href="#abr"/></svg></button><button disabled aria-label="Zmień"><svg><use href="#abx"/></svg></button>
<i class="grip"></i>
<button aria-label="Dodaj usługę"><svg><use href="#webadd"/></svg></button><button aria-label="Szukaj usługi"><svg><use href="#webq"/></svg></button><button aria-label="MetaSearch"><svg><use href="#bino"/></svg></button>
<i class="grip"></i><button aria-label="Python"><svg><use href="#py"/></svg></button>
<i class="grip"></i><button aria-label="Pomoc"><svg><use href="#help"/></svg></button>
<i class="grip"></i><button aria-label="Arkusz"><svg><use href="#sheet"/></svg></button>
</div>

<div class="bar" role="toolbar" aria-label="Przyciąganie">
<i class="grip first"></i>
<button class="on" aria-label="Przyciąganie"><svg><use href="#magnet"/></svg></button><button aria-label="Warstwy"><svg><use href="#snapv"/></svg></button><button class="on" aria-label="Wierzchołek"><svg><use href="#snapp"/></svg></button>
<div class="spin tol"><input type="text" value="12" aria-label="Tolerancja"><svg class="clr"><use href="#clr"/></svg><span class="ud"><button aria-label="Więcej"></button><button aria-label="Mniej"></button></span></div>
<div class="combo unit"><select aria-label="Jednostka"><option>px</option></select></div>
<button aria-label="Topologia"><svg><use href="#topo"/></svg></button><button aria-label="Nakładanie"><svg><use href="#overlap"/></svg></button><button aria-label="Przecięcie"><svg><use href="#inter"/></svg></button><button aria-label="Śledzenie"><svg><use href="#bolt"/></svg></button><i class="arr"></i><button aria-label="Rysowanie"><svg><use href="#trace"/></svg></button>
</div>

<div class="bar" role="toolbar" aria-label="Wybór i adnotacje">
<i class="grip first"></i>
<button aria-label="Wybierz"><svg><use href="#sel"/></svg></button><i class="arr"></i><button aria-label="Wybierz wg formularza"><svg><use href="#selform"/></svg></button><i class="arr"></i><button aria-label="Odznacz"><svg><use href="#desel"/></svg></button><i class="arr"></i><button aria-label="Wybierz wg położenia"><svg><use href="#selloc"/></svg></button>
<i class="grip"></i>
<button disabled aria-label="Edytuj siatkę"><svg><use href="#gg1"/></svg></button><button disabled aria-label="Wybierz siatkę"><svg><use href="#gg2"/></svg></button><i class="arr dim"></i><button disabled aria-label="Przekształć"><svg><use href="#gg3"/></svg></button><button disabled aria-label="Linie siatki"><svg><use href="#gg4"/></svg></button><i class="arr dim"></i>
<i class="grip"></i>
<button aria-label="Warstwa adnotacji"><svg><use href="#anno"/></svg></button><i class="arr"></i><button aria-label="Zmień adnotację"><svg><use href="#asel"/></svg></button><button aria-label="Poligon"><svg><use href="#apoly"/></svg></button><button aria-label="Linia"><svg><use href="#aline"/></svg></button><button aria-label="Znacznik"><svg><use href="#astar"/></svg></button><button aria-label="Tekst"><svg><use href="#atext"/></svg></button><i class="sep"></i><button aria-label="Adnotacja tekstowa"><svg><use href="#atip"/></svg></button><i class="arr"></i>
</div>

<main>
<aside class="dock">
<header><h2>Przeglądarka</h2><button aria-label="Odepnij"><svg><use href="#flt"/></svg></button><button aria-label="Zamknij"><svg><use href="#cls"/></svg></button></header>
<div class="mini"><button aria-label="Dodaj"><svg><use href="#addl"/></svg></button><button aria-label="Odśwież"><svg><use href="#refresh"/></svg></button><button aria-label="Filtr"><svg><use href="#funnel"/></svg></button><button aria-label="Zwiń"><svg><use href="#tup"/></svg></button><button aria-label="Właściwości"><svg><use href="#infob"/></svg></button></div>
<section class="browser">
<ul class="tree">
<li><i class="tw open"></i><svg><use href="#pg"/></svg>PostgreSQL</li>
<li class="l1"><i class="tw open"></i><svg><use href="#conn"/></svg>localhost</li>
<li class="l2"><i class="tw open"></i><svg><use href="#db"/></svg>public</li>
<li class="l3"><i class="tw"></i><svg><use href="#pts"/></svg>airports</li>
<li class="l3 cur"><i class="tw"></i><svg><use href="#lin"/></svg>rail</li>
<li class="l3"><i class="tw"></i><svg><use href="#pol"/></svg>regions</li>
<li class="l3"><i class="tw"></i><svg><use href="#pol"/></svg>trees_b</li>
<li><i class="tw none"></i><svg><use href="#sap"/></svg>SAP HANA</li>
<li><i class="tw none"></i><svg><use href="#mssql"/></svg>MS SQL Server</li>
<li><i class="tw none"></i><svg><use href="#ora"/></svg>Oracle</li>
<li><i class="tw none"></i><svg><use href="#wms"/></svg>WMS/WMTS</li>
<li><i class="tw none"></i><svg><use href="#vtl"/></svg>Vector Tiles</li>
<li><i class="tw"></i><svg><use href="#xyz"/></svg>XYZ Tiles</li>
</ul>
<div class="vbar"><i class="up"></i><i class="thumb"></i><i class="down"></i></div>
<div class="hbar"><i class="prev"></i><i class="thumb"></i><i class="next"></i></div>
<div class="corner"></div>
</section>
<div class="hgrip"></div>
<header><h2>Warstwy</h2><button aria-label="Odepnij"><svg><use href="#flt"/></svg></button><button aria-label="Zamknij"><svg><use href="#cls"/></svg></button></header>
<div class="mini"><button aria-label="Styl"><svg><use href="#brush"/></svg></button><button aria-label="Dodaj grupę"><svg><use href="#grp"/></svg></button><button aria-label="Widoczność"><svg><use href="#eye"/></svg></button><button aria-label="Filtruj legendę"><svg><use href="#funneld"/></svg></button><button disabled aria-label="Filtruj wyrażeniem"><svg><use href="#eps"/></svg></button><i class="arr dim"></i><button aria-label="Rozwiń"><svg><use href="#tdn"/></svg></button><button aria-label="Zwiń"><svg><use href="#tup"/></svg></button><button aria-label="Usuń warstwę"><svg><use href="#rem"/></svg></button></div>
<section class="layers">
<ul>
<li class="off"><label><input type="checkbox"><i class="sw c1"></i>Bufor_lot</label><svg><use href="#mem"/></svg></li>
<li class="off"><label><input type="checkbox"><i class="sw c2"></i>Zagregowane obiekty</label><svg><use href="#mem"/></svg></li>
<li><label><input type="checkbox" checked><i class="sw dot"></i>airports</label></li>
<li><label><input type="checkbox" checked><i class="sw c3"></i>Różnica</label><svg><use href="#mem"/></svg></li>
<li class="off parent"><i class="tw open"></i><label><input type="checkbox"><svg class="pl"><use href="#pol"/></svg><u>trees_b</u></label></li>
<li class="sub"><label><input type="checkbox"><i class="sw c4"></i>Deciduous</label></li>
<li class="sub"><label><input type="checkbox"><i class="sw c5"></i>Evergreen</label></li>
<li class="sub"><label><input type="checkbox"><i class="sw c6"></i>Mixed Trees</label></li>
<li class="sub"><label><input type="checkbox" aria-label="Pozostałe"><i class="sw c7"></i></label></li>
<li class="off"><label><input type="checkbox"><i class="sw c8"></i>regions</label></li>
<li><label><input type="checkbox" checked><i class="sw line"></i>rail</label></li>
<li class="off"><label><input type="checkbox"><i class="sw c9"></i>Bufor_kol</label><svg><use href="#mem"/></svg></li>
</ul>
<div class="hbar"><i class="prev"></i><i class="thumb"></i><i class="next"></i></div>
</section>
</aside>

<section class="canvas">
<svg width="1323" height="786" viewBox="239 183 1323 786">
<defs>
<path id="b" d="M36.700 0L34.900 11.300 29.700 21.600 21.600 29.700 11.300 34.900 0 36.700-11.300 34.900-21.600 29.700-29.700 21.600-34.900 11.300-36.700 0-34.900-11.300-29.700-21.600-21.600-29.700-11.300-34.900 0-36.700 11.300-34.900 21.600-29.700 29.700-21.600 34.900-11.300z"/>
<circle id="d" r="4.700"/>
<g id="h" transform="translate(800 340) scale(.33333)">
<path d="M190 447Q175 480 169 515V560Q171 605 178 640L193 666Q184 690 192 715 202 742 228 761L226 830Q235 870 280 873 325 868 334 830L338 800 355 780 368 755Q374 720 362 705L345 688 326 680Q338 650 328 625 312 592 283 585L277 543Q295 520 303 478L340 380 330 345 316 318V292Q325 290 335 295 350 304 375 304 415 295 421 255 420 215 380 194 345 170 305 169 280 172 262 192 205 215 205 260L208 280 200 315 205 350 224 388 218 403z"/>
<path d="M1156 658Q1190 655 1210 690 1216 715 1210 740 1208 765 1190 790 1172 804 1153 803 1120 800 1105 775 1092 750 1098 730 1104 720 1103 695 1115 660 1156 658z"/>
</g>
<clipPath id="edge">
<use href="#b" x="831" y="462"/><use href="#b" x="912" y="417"/><use href="#b" x="907" y="419"/><use href="#b" x="887" y="431"/><use href="#b" x="887" y="442"/><use href="#b" x="921" y="423"/><use href="#b" x="949" y="448"/><use href="#b" x="874" y="524"/><use href="#b" x="896" y="552"/><use href="#b" x="887" y="567"/><use href="#b" x="882" y="556"/><use href="#b" x="879" y="571"/><use href="#b" x="893" y="613"/><use href="#b" x="953" y="566"/><use href="#b" x="1183" y="589"/><use href="#b" x="1182" y="599"/><use href="#b" x="1187" y="633"/>
</clipPath>
</defs>
<g class="buf" stroke-width="1.200">
<use href="#b" x="659" y="302"/><use href="#b" x="661" y="330"/><use href="#b" x="738" y="328"/><use href="#b" x="702" y="346"/><use href="#b" x="681" y="369"/><use href="#b" x="676" y="393"/><use href="#b" x="676" y="412"/><use href="#b" x="659" y="420"/><use href="#b" x="565" y="368"/><use href="#b" x="581" y="384"/><use href="#b" x="599" y="419"/><use href="#b" x="483" y="424"/><use href="#b" x="504" y="433"/><use href="#b" x="749" y="426"/><use href="#b" x="840" y="337"/><use href="#b" x="805" y="375"/><use href="#b" x="833" y="408"/><use href="#b" x="831" y="462"/><use href="#b" x="943" y="342"/><use href="#b" x="678" y="455"/><use href="#b" x="605" y="492"/><use href="#b" x="684" y="507"/><use href="#b" x="623" y="524"/><use href="#b" x="569" y="527"/><use href="#b" x="693" y="552"/><use href="#b" x="554" y="583"/><use href="#b" x="644" y="580"/><use href="#b" x="770" y="500"/><use href="#b" x="763" y="502"/><use href="#b" x="769" y="576"/><use href="#b" x="781" y="632"/><use href="#b" x="774" y="648"/><use href="#b" x="629" y="667"/><use href="#b" x="706" y="658"/><use href="#b" x="744" y="675"/>
<use href="#b" x="912" y="417"/><use href="#b" x="907" y="419"/><use href="#b" x="887" y="431"/><use href="#b" x="887" y="442"/><use href="#b" x="921" y="423"/><use href="#b" x="949" y="448"/><use href="#b" x="995" y="467"/><use href="#b" x="1024" y="479"/>
<use href="#b" x="874" y="524"/><use href="#b" x="856" y="597"/><use href="#b" x="860" y="601"/><use href="#b" x="896" y="552"/><use href="#b" x="882" y="556"/><use href="#b" x="887" y="567"/><use href="#b" x="884" y="567"/><use href="#b" x="882" y="569"/><use href="#b" x="879" y="571"/><use href="#b" x="893" y="613"/><use href="#b" x="852" y="635"/><use href="#b" x="963" y="522"/><use href="#b" x="953" y="566"/><use href="#b" x="971" y="590"/>
<use href="#b" x="833" y="714"/><use href="#b" x="697" y="743"/><use href="#b" x="1095" y="610"/>
<use href="#b" x="1183" y="589"/><use href="#b" x="1182" y="599"/><use href="#b" x="1187" y="633"/><use href="#b" x="1197" y="644"/><use href="#b" x="1242" y="679"/><use href="#b" x="1264" y="679"/><use href="#b" x="1281" y="687"/><use href="#b" x="1277" y="727"/><use href="#b" x="1317" y="737"/>
<use href="#b" x="444" y="694"/><use href="#b" x="450" y="721"/><use href="#b" x="298" y="863"/><use href="#b" x="498" y="843"/><use href="#b" x="435" y="870"/><use href="#b" x="597" y="805"/>
</g>
<use href="#h" fill="#fff"/>
<g clip-path="url(#edge)"><use href="#h" fill="none" stroke="#232323" stroke-width="4"/></g>
<g transform="translate(800 340) scale(.33333)" fill="none" stroke="#a5603a" stroke-width="4">
<path d="M258 290L261 262 270 245 290 240 305 225 335 228 350 240 363 249M258 300L256 318 264 345 278 358 276 372 284 400 264 432 246 456 243 492 225 515 222 552 228 570 228 610 234 632 246 648 288 636 282 650 262 664 240 690 252 709 275 718 295 716 300 730 302 736 317 736M295 716L299 745 296 764 282 772 283 819M1156 712L1153 735"/>
</g>
<g class="air">
<use href="#d" x="659" y="302"/><use href="#d" x="661" y="330"/><use href="#d" x="738" y="328"/><use href="#d" x="702" y="346"/><use href="#d" x="681" y="369"/><use href="#d" x="676" y="393"/><use href="#d" x="676" y="412"/><use href="#d" x="659" y="420"/><use href="#d" x="565" y="368"/><use href="#d" x="581" y="384"/><use href="#d" x="599" y="419"/><use href="#d" x="483" y="424"/><use href="#d" x="504" y="433"/><use href="#d" x="749" y="426"/><use href="#d" x="840" y="337"/><use href="#d" x="805" y="375"/><use href="#d" x="833" y="408"/><use href="#d" x="831" y="462"/><use href="#d" x="943" y="342"/><use href="#d" x="678" y="455"/><use href="#d" x="605" y="492"/><use href="#d" x="684" y="507"/><use href="#d" x="623" y="524"/><use href="#d" x="569" y="527"/><use href="#d" x="693" y="552"/><use href="#d" x="554" y="583"/><use href="#d" x="644" y="580"/><use href="#d" x="770" y="500"/><use href="#d" x="763" y="502"/><use href="#d" x="769" y="576"/><use href="#d" x="781" y="632"/><use href="#d" x="774" y="648"/><use href="#d" x="629" y="667"/><use href="#d" x="706" y="658"/><use href="#d" x="744" y="675"/>
<use href="#d" x="912" y="417"/><use href="#d" x="907" y="419"/><use href="#d" x="887" y="431"/><use href="#d" x="887" y="442"/><use href="#d" x="921" y="423"/><use href="#d" x="949" y="448"/><use href="#d" x="995" y="467"/><use href="#d" x="1024" y="479"/>
<use href="#d" x="874" y="524"/><use href="#d" x="856" y="597"/><use href="#d" x="860" y="601"/><use href="#d" x="896" y="552"/><use href="#d" x="882" y="556"/><use href="#d" x="887" y="567"/><use href="#d" x="884" y="567"/><use href="#d" x="882" y="569"/><use href="#d" x="879" y="571"/><use href="#d" x="893" y="613"/><use href="#d" x="852" y="635"/><use href="#d" x="963" y="522"/><use href="#d" x="953" y="566"/><use href="#d" x="971" y="590"/>
<use href="#d" x="833" y="714"/><use href="#d" x="697" y="743"/><use href="#d" x="1095" y="610"/>
<use href="#d" x="1183" y="589"/><use href="#d" x="1182" y="599"/><use href="#d" x="1187" y="633"/><use href="#d" x="1197" y="644"/><use href="#d" x="1242" y="679"/><use href="#d" x="1264" y="679"/><use href="#d" x="1281" y="687"/><use href="#d" x="1277" y="727"/><use href="#d" x="1317" y="737"/>
<use href="#d" x="444" y="694"/><use href="#d" x="450" y="721"/><use href="#d" x="298" y="863"/><use href="#d" x="498" y="843"/><use href="#d" x="435" y="870"/><use href="#d" x="597" y="805"/>
</g>
</svg>
</section>

<aside class="results">
<div class="list"></div>
<div class="hgrip"></div>
<div class="report"><b>Algorithm</b>: Statystyki<br><b>File path</b>: <a href="#">C:<br>\Users\Dell7520\AppData\Local\Temp\processing_MpiGWf<br>\af07d0996c2e448fbf4588ebee14f2bd\OUTPUT_HTML_FIL<br>E.html</a></div>
</aside>
</main>

<footer class="status">
<label class="find"><svg><use href="#search"/></svg><input type="text" placeholder="Szukana fraza (Ctrl+K)" aria-label="Szukana fraza"></label>
<label class="push" for="coord">Współrzędne</label><input class="field" id="coord" type="text" value="-4962937 6750232">
<svg class="s20 mouse"><use href="#mouse"/></svg>
<label for="scale">Skala</label><div class="combo scale"><select id="scale"><option>.:12848599</option></select></div>
<svg class="lock"><use href="#lock"/></svg>
<label for="mag">Powiększenie</label><div class="spin mag"><input id="mag" type="text" value="100%"><span class="ud"><button aria-label="Więcej"></button><button aria-label="Mniej"></button></span></div>
<label for="rot">Kąt obrotu</label><div class="spin rot"><input id="rot" type="text" value="0,0 º"><span class="ud"><button aria-label="Więcej"></button><button aria-label="Mniej"></button></span></div>
<label class="render"><input type="checkbox" checked>Renderuj</label>
<svg class="s20 crs"><use href="#crs"/></svg><span class="epsg">EPSG:2964</span>
<svg class="s20"><use href="#msg"/></svg>
</footer>

<div class="dialog" role="dialog" aria-label="Różnica">
<div class="title"><svg><use href="#qgis"/></svg>Różnica</div>
<div class="content">
<div class="params">
<div class="tabs"><button class="act">Parametry</button><button>Plik zdarzeń</button></div>
<form class="pane">
<label class="lb" for="in">Warstwa wejściowa</label>
<div class="row"><div class="combo src"><svg><use href="#pol"/></svg><select id="in"><option>Bufor_lot [EPSG:2964]</option></select></div><svg class="lp"><use href="#loop"/></svg><svg class="wr"><use href="#wrench"/></svg><button type="button" class="more">...</button></div>
<label class="ck dis"><input type="checkbox" disabled>Tylko zaznaczone obiekty</label>
<label class="lb" for="ov">Warstwa nakładki</label>
<div class="row"><div class="combo src"><svg><use href="#pol"/></svg><select id="ov"><option>Bufor_kol [EPSG:2964]</option></select></div><svg class="lp"><use href="#loop"/></svg><svg class="wr"><use href="#wrench"/></svg><button type="button" class="more">...</button></div>
<label class="ck dis"><input type="checkbox" disabled>Tylko zaznaczone obiekty</label>
<label class="lb" for="out">Różnica</label>
<div class="row"><input id="out" class="out" type="text" placeholder="[Twórz warstwę tymczasową]"><button type="button" class="more tall">...</button></div>
<label class="ck"><input type="checkbox" checked>Wczytaj plik wynikowy po zakończeniu</label>
</form>
</div>
<div class="split"></div>
<article class="doc">
<h1>Różnica</h1>
<p>Ten algorytm<br>wyodrębnia obiekty z<br>warstwy wejściowej,<br>które znajdują się na<br>zewnątrz lub<br>częściowo pokrywają<br>się z obiektami w<br>warstwie nakładki.<br>Obiekty warstwy<br>wejściowej, które<br>częściowo nakładają<br>się na obiekty w<br>warstwie nakładki, są<br>dzielone wzdłuż<br>granicy tych obiektów i<br>zachowywane są tylko<br>te części, które<br>znajdują się poza<br>warstwą nakładki.</p>
<p>Atrybuty obiektów nie<br>są modyfikowane,<br>chociaż właściwości<br>takie jak powierzchnia<br>lub długość obiektów<br>zostaną<br>zmodyfikowane przez<br>operację różnicy. Jeśli<br>takie właściwości są<br>przechowywane jako</p>
</article>
</div>
<div class="prog"><div class="meter">0%</div><button disabled>Anuluj</button></div>
<div class="acts"><button class="adv">Zaawansowane<i class="arr"></i></button><button class="batch">Wykonaj jako przetwarzanie wsadowe...</button><button class="def">Uruchom</button><button>Zamknij</button><button>Pomoc</button></div>
</div>
</body>
</html>
```
FILE: styles.css
```css
* { box-sizing: border-box; }
body {
  margin: 0; height: 100vh; overflow: hidden; position: relative;
  display: flex; flex-direction: column;
  background: #efefef; color: #000;
  font: 12px/16px "Noto Sans", "Open Sans", sans-serif;
}
button, input, select { font: inherit; color: inherit; margin: 0; }
ul { list-style: none; margin: 0; padding: 0; }
i { font-style: normal; }
.paints { position: absolute; width: 0; height: 0; }
.sprite { display: none; }

.menu {
  flex: none; display: flex; gap: 15px; height: 26px; padding: 0 8px;
  border-bottom: 1px solid #d5d5d5; border-top: 1px solid #fff;
  font-size: 14px; line-height: 25px;
}
.menu a { color: #9b9b9b; text-decoration: none; white-space: nowrap; }
.menu u { text-underline-offset: 2px; }

.bar {
  flex: none; display: flex; align-items: center; height: 39px;
  background: linear-gradient(#fafafa, #ededed);
  border-bottom: 1px solid #b9b9b9;
}
.bar > button {
  flex: none; width: 31px; height: 31px; margin: 0 1px; padding: 0;
  border: 1px solid transparent; border-radius: 3px; background: none;
  display: grid; place-items: center;
}
.bar > button svg { width: 24px; height: 24px; }
.bar > button.on { background: #dcdcdc; border-color: #a9a9a9; }
button:disabled svg { opacity: .35; filter: grayscale(1); }
.grip { flex: none; width: 18px; height: 20px; background: radial-gradient(circle, #aaa 1px, transparent 1px) 9px 0 / 4px 4px repeat-y, radial-gradient(circle, #aaa 1px, transparent 1px) 12px 2px / 4px 4px repeat-y; }
.grip.first { width: 11px; background-position: 1px 0, 4px 2px; }
.arr { flex: none; width: 15px; display: grid; place-items: center; }
.arr::after, .combo::after { content: ""; border: 5px solid transparent; border-top-color: #555; border-bottom: 0; }
.arr.dim::after { border-top-color: #9a9a9a; }
.sep { flex: none; width: 1px; height: 20px; margin: 0 4px 0 3px; background: #cfcfcf; }

input[type=text] { border: 0; outline: 0; background: none; padding: 0; min-width: 0; }
.spin { display: flex; align-items: center; background: #fff; border: 1px solid #a9a9a9; border-radius: 2px; }
.spin input { flex: 1; width: 10px; padding-left: 4px; }
.ud { flex: none; align-self: stretch; width: 16px; display: flex; flex-direction: column; justify-content: center; gap: 4px; align-items: center; border-left: 1px solid #b9b9b9; background: #f7f7f7; }
.ud button { border: 5px solid transparent; border-bottom-color: #555; border-top: 0; width: 10px; height: 5px; padding: 0; background: none; }
.ud button + button { border-top: 5px solid #555; border-bottom: 0; }
.combo { position: relative; display: flex; align-items: center; background: linear-gradient(#fff, #f0f0f0); border: 1px solid #a9a9a9; border-radius: 2px; }
.combo select { appearance: none; flex: 1; min-width: 0; border: 0; outline: 0; background: none; padding: 0 0 0 4px; }
.combo::after { margin-right: 9px; }
.tol { width: 92px; height: 24px; margin: 0 2px 0 1px; }
.clr { width: 16px; height: 13px; margin-right: 12px; }
.unit { width: 100px; height: 24px; margin-right: 1px; }

main { flex: 1; min-height: 0; display: flex; }
.dock { flex: none; width: 232px; margin-right: 6px; display: flex; flex-direction: column; }
.dock header { flex: none; height: 23px; display: flex; align-items: center; gap: 3px; padding: 0 3px 2px 1px; }
.dock h2 { flex: 1; margin: 0; font-size: 14px; font-weight: 400; }
.dock header button { width: 11px; height: 11px; padding: 0; border: 0; background: none; display: grid; }
.dock header svg { width: 11px; height: 11px; }
.mini { flex: none; height: 27px; display: flex; align-items: center; padding: 0 0 5px; }
.mini button { width: 25px; padding: 0; border: 0; background: none; display: grid; place-items: center; }
.mini svg { width: 16px; height: 16px; }
.browser {
  flex: none; height: 298px; width: 231px; border: 1px solid #b4b4b4; border-left: 0; background: #fff;
  display: grid; grid-template: minmax(0, 1fr) 17px / minmax(0, 1fr) 17px;
}
.tree { overflow: hidden; padding-top: 1px; }
.tree li { height: 22px; display: flex; align-items: center; font-size: 14px; line-height: 22px; white-space: nowrap; }
.tree svg { width: 20px; height: 20px; margin-right: 6px; flex: none; }
.tree .l1 { padding-left: 17px; } .tree .l2 { padding-left: 34px; } .tree .l3 { padding-left: 51px; }
.tree .cur { background: #efefef; }
.tw { flex: none; width: 18px; display: grid; place-items: center start; }
.tw::after { content: ""; border: 5px solid transparent; border-left-color: #666; border-right: 0; margin-left: 4px; }
.tw.open::after { border: 5px solid transparent; border-top-color: #666; border-bottom: 0; margin-left: 2px; }
.tw.none::after { border-color: transparent; }
.vbar { border-left: 1px solid #b4b4b4; background: #e3e3e3; display: flex; flex-direction: column; }
.vbar i, .hbar i { display: grid; place-items: center; background: #f7f7f7; }
.vbar .up { height: 17px; border-bottom: 1px solid #b4b4b4; }
.vbar .down { height: 17px; border-top: 1px solid #b4b4b4; margin-top: auto; }
.vbar .thumb { height: 115px; margin-top: 84px; border: solid #b4b4b4; border-width: 1px 0; background: linear-gradient(90deg, #fff, #ededed); }
.up::after { content: ""; border: 5px solid transparent; border-bottom-color: #555; border-top: 0; }
.down::after { content: ""; border: 5px solid transparent; border-top-color: #555; border-bottom: 0; }
.hbar { flex: none; height: 17px; border-top: 1px solid #b4b4b4; display: flex; }
.hbar .prev, .hbar .next { width: 15px; }
.hbar .thumb { flex: 1; border: solid #b4b4b4; border-width: 0 1px; background: linear-gradient(#fff, #ededed); }
.prev::after { content: ""; border: 5px solid transparent; border-right-color: #555; border-left: 0; }
.next::after { content: ""; border: 5px solid transparent; border-left-color: #555; border-right: 0; }
.corner { border: solid #b4b4b4; border-width: 1px 0 0 1px; background: #efefef; }
.hgrip { flex: none; height: 7px; background: linear-gradient(90deg, #aaa 1px, transparent 1px) center / 3px 1px no-repeat; position: relative; display: grid; place-items: center; }
.hgrip::after { content: ""; width: 16px; border-top: 1px dotted #aaa; }
.layers { flex: 1; min-height: 0; width: 231px; border: 1px solid #b4b4b4; border-left: 0; background: #fff; display: flex; flex-direction: column; overflow: hidden; }
.layers ul { flex: 1; padding-top: 1px; }
.layers li { position: relative; height: 22px; display: flex; align-items: center; padding-left: 26px; font-size: 14px; font-weight: 700; white-space: nowrap; }
.layers li > svg { position: absolute; right: 8px; top: 2px; width: 18px; height: 18px; }
.layers label { display: flex; align-items: center; }
.layers .off { color: #858585; font-style: italic; font-size: 15px; }
.layers .parent { padding-left: 8px; }
.layers .parent .tw::after { margin-left: -3px; }
.layers .sub { padding-left: 51px; font-weight: 400; }
.sw { flex: none; width: 19px; height: 19px; margin: 0 6px; border: 1px solid #333; }
.pl { width: 20px; height: 20px; margin: 0 6px 0 5px; }
.c1 { background: #85b66f; } .c2 { background: #05e9dc; } .c3 { background: #d4b43a; } .c4 { background: #e8690e; } .c5 { background: #03d503; }
.c6 { background: #8a00d4; } .c7 { background: #67df9a; } .c8 { background: #e15989; } .c9 { background: #1ba28b; }
.sw.dot { width: 11px; height: 11px; border-radius: 50%; background: #c43c39; margin: 0 10px; }
.sw.line { height: 2px; border: 0; background: #b58a74; }
input[type=checkbox] { appearance: none; flex: none; width: 17px; height: 17px; border: 1px solid #b9b9b9; background: #fff; display: grid; place-items: center; }
input[type=checkbox]:checked::after { content: ""; width: 5px; height: 10px; border: solid #000; border-width: 0 2px 2px 0; rotate: 38deg; }

.canvas { flex: 1; min-width: 0; overflow: hidden; background: #fff; border: 1px solid #b4b4b4; }
.canvas svg { display: block; }
.buf { fill: #d4b43a; stroke: #232323; }
.air { fill: #c43c39; stroke: #232323; stroke-width: 1; }
.results { flex: none; width: 347px; margin-left: 7px; display: flex; flex-direction: column; }
.list { flex: 1; background: #fff; border: 1px solid #b4b4b4; }
.results .hgrip { height: 5px; }
.report { flex: none; height: 204px; padding: 5px 4px; background: #fff; border: 1px solid #b4b4b4; white-space: nowrap; overflow: hidden; }
.report a { color: #00f; }

.status { flex: none; height: 32px; display: flex; align-items: center; padding: 0 8px 0 1px; white-space: nowrap; }
.status svg { flex: none; }
.find { width: 232px; height: 26px; display: flex; align-items: center; gap: 8px; padding-left: 10px; background: #fff; border: 1px solid #a9a9a9; border-radius: 2px; }
.find svg { width: 16px; height: 16px; }
::placeholder { color: #8b8b8b; opacity: 1; }
.push { margin-left: auto; }
.status .field { width: 122px; height: 26px; margin: 0 4px; background: #fff; border: 1px solid #a9a9a9; border-radius: 2px; text-align: center; }
.s20 { width: 20px; height: 20px; }
.mouse { margin-right: 12px; }
.scale { width: 93px; height: 24px; margin: 0 12px 0 5px; background: #fff; }
.scale select { padding-left: 3px; }
.scale::after { margin-right: 7px; }
.lock { width: 16px; height: 20px; margin-right: 9px; }
.spin.mag { width: 93px; height: 24px; margin: 0 10px 0 4px; }
.spin.rot { width: 89px; height: 24px; margin: 0 7px 0 8px; }
.render { display: flex; align-items: center; gap: 7px; margin-right: 15px; }
.crs { margin-right: 2px; }
.epsg { margin-right: 26px; }

.dialog {
  position: absolute; left: 1287px; top: 0; width: 674px; height: 660px;
  display: flex; flex-direction: column; background: #efefef;
  border: solid #5c5c5c; border-width: 0 1px 1px; box-shadow: 0 6px 18px rgba(0, 0, 0, .4);
}
.title { flex: none; height: 29px; padding: 0 0 8px 9px; background: #fff; display: flex; align-items: center; gap: 6px; font-size: 14px; }
.title svg { width: 20px; height: 20px; }
.content { flex: none; height: 530px; padding: 13px 0 0 13px; display: flex; }
.params { width: 474px; display: flex; flex-direction: column; }
.tabs { flex: none; height: 29px; display: flex; align-items: flex-end; }
.tabs button { width: 98px; height: 27px; padding: 3px 0 0; border: 1px solid #b9b9b9; border-width: 1px 1px 0 0; border-radius: 2px 2px 0 0; background: #e6e6e6; }
.tabs .act { width: 89px; height: 30px; margin-bottom: -1px; padding: 2px 0 0; background: #fbfbfb; border-color: #a9a9a9; border-left-width: 1px; }
.pane { flex: 1; border: 1px solid #a9a9a9; padding: 6px 5px; display: flex; flex-direction: column; }
.lb { height: 22px; }
.row { display: flex; align-items: flex-start; }
.src { width: 352px; height: 28px; }
.src svg { width: 20px; height: 20px; margin-left: 5px; }
.lp { width: 24px; height: 24px; margin: 1px 12px 0 11px; }
.wr { width: 26px; height: 26px; }
.more { width: 27px; height: 23px; margin-left: auto; padding: 0 4px 0 0; position: relative; border: 1px solid #b0b0b0; border-radius: 2px; background: linear-gradient(#fff, #efefef); }
.more::after { content: ""; position: absolute; right: 1px; bottom: 4px; border: 4px solid transparent; border-top: 5px solid #555; border-bottom: 0; }
.more.tall { height: 26px; }
.ck { display: flex; align-items: center; gap: 6px; height: 17px; margin: 8px 0 11px; }
.dis { color: #858585; }
.dis input { background: #efefef; }
.out + .more { margin-left: 7px; }
input.out { flex: 1; height: 26px; padding: 0 3px; background: #fff; border: 1px solid #a9a9a9; border-radius: 2px; }
.row + .ck:last-child { margin-top: 9px; }
.split { position: relative; width: 14px; }
.split::before { content: ""; position: absolute; left: 4px; top: 1px; border: 5px solid transparent; border-left: 5px solid #555; border-right: 0; }
.split::after { content: ""; position: absolute; left: 7px; top: 50%; height: 18px; border-left: 1px dotted #aaa; }
.doc { width: 158px; padding: 7px 4px; border: 1px solid #a9a9a9; background: #fff; color: #555; overflow: hidden; white-space: nowrap; }
.doc h1 { margin: 0 0 14px; font-size: 20px; line-height: 20px; }
.doc p { margin: 0 0 12px; }
.prog { flex: none; margin: 30px 12px 0 13px; display: flex; gap: 7px; }
.meter { flex: 1; height: 24px; line-height: 22px; text-align: center; background: #fff; border: 1px solid #a9a9a9; border-radius: 2px; }
.prog button, .acts button { width: 80px; height: 25px; padding: 0; border: 1px solid #a9a9a9; border-radius: 2px; background: linear-gradient(#fff, #f0f0f0); white-space: nowrap; }
.prog button { color: #999; border-color: #c5c5c5; }
.acts { flex: none; display: flex; gap: 7px; margin: 8px 12px 0 13px; }
.acts .adv { width: 113px; display: flex; align-items: center; justify-content: center; gap: 2px; }
.acts .batch { width: 240px; margin-right: auto; }
.acts .def { border-color: #3c9ce8; background: linear-gradient(#fff, #e6eef5); }
```
